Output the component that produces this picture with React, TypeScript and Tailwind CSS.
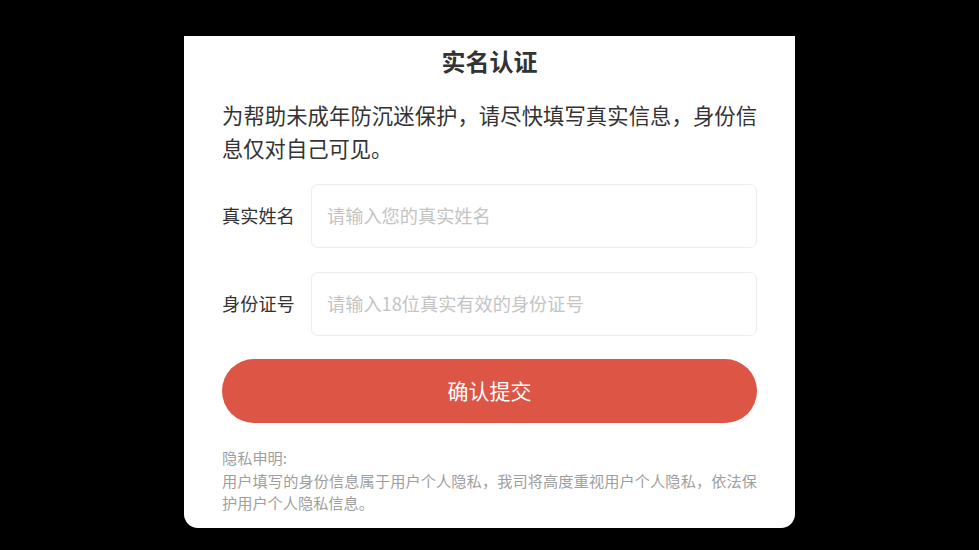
import React from "react";

export default function App() {
  const font = { fontFamily: '"Noto Sans CJK SC", "Noto Sans", sans-serif' };
  return (
    <div className="w-[979px] h-[550px] bg-black flex justify-center overflow-hidden" style={font}>
      <div className="mt-[36px] w-[611px] h-[492px] bg-white rounded-b-[14px] px-[38px] pt-[9px] pb-[14px] flex flex-col">
        <div className="h-[32px] leading-[32px] text-center text-[24px] font-bold text-[#333333]">实名认证</div>
        <p className="mt-[21px] text-[21.3px] leading-[33px] text-[#333333] text-justify">
          为帮助未成年防沉迷保护，请尽快填写真实信息，身份信息仅对自己可见。
        </p>
        <div className="mt-[20px] flex flex-col gap-[24px]">
          <div className="flex items-center h-[64px]">
            <span className="w-[89px] shrink-0 text-[18.2px] text-[#333333]">真实姓名</span>
            <div className="flex-1 h-full border border-[#ececec] rounded-[7px] flex items-center pl-[15px] text-[18.2px] text-[#c4c4c4]">
              请输入您的真实姓名
            </div>
          </div>
          <div className="flex items-center h-[64px]">
            <span className="w-[89px] shrink-0 text-[18.2px] text-[#333333]">身份证号</span>
            <div className="flex-1 h-full border border-[#ececec] rounded-[7px] flex items-center pl-[15px] text-[18.2px] text-[#c4c4c4]">
              请输入18位真实有效的身份证号
            </div>
          </div>
        </div>
        <button className="mt-[23px] h-[64px] w-full rounded-full bg-[#dc5545] text-white text-[21px] flex items-center justify-center">
          确认提交
        </button>
        <div className="mt-[23px] text-[15.2px] leading-[22.5px] text-[#9e9e9e] text-justify">
          <div>隐私申明:</div>
          <div>用户填写的身份信息属于用户个人隐私，我司将高度重视用户个人隐私，依法保护用户个人隐私信息。</div>
        </div>
      </div>
    </div>
  );
}
